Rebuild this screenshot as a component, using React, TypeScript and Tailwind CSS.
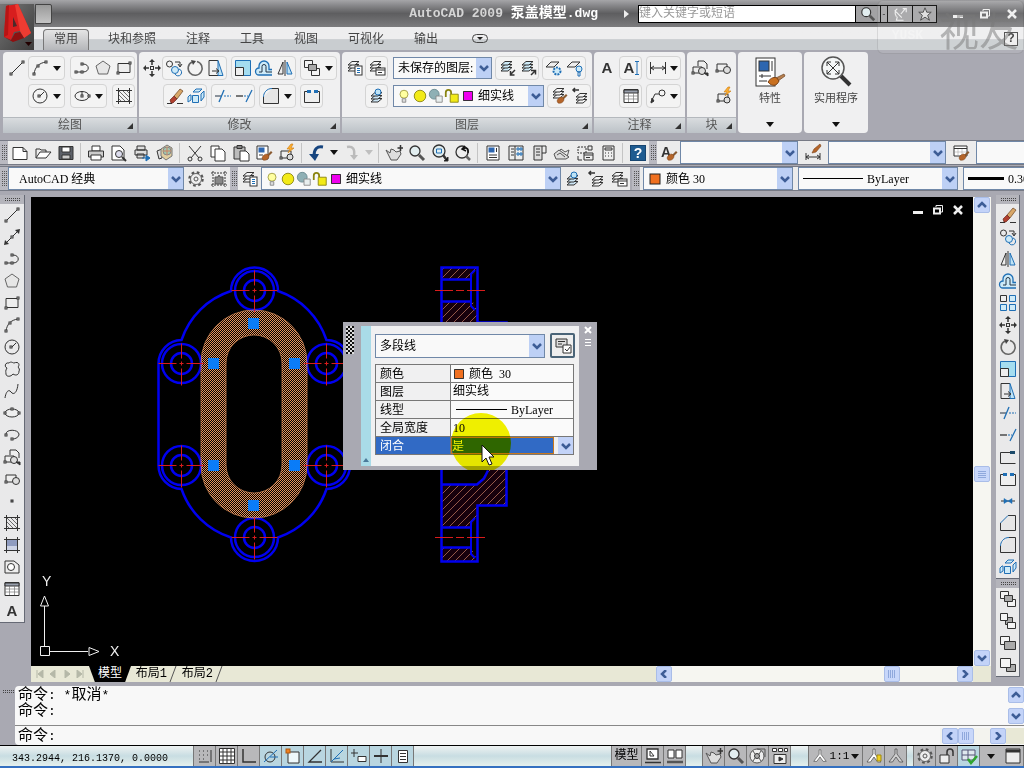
import type { ReactNode } from 'react';
import clsx from 'clsx';

const BLUE = '#1f6fb5';

function Node({ x, y }: { x: number; y: number }) {
  return <rect x={x - 1} y={y - 1} width="2" height="2" fill="#fff" stroke="#333" />;
}

function Stack({ x = 0, y = 0, fill = '#f4f4f4' }: { x?: number; y?: number; fill?: string }) {
  return (
    <g transform={`translate(${x} ${y})`} fill={fill}>
      <path d="M5 7.5h7l-4 3.5H1z" />
      <path d="M5 4.5h7l-4 3.5H1z" />
      <path d="M5 1.5h7l-4 3.5H1z" />
    </g>
  );
}

function Brush() {
  return (
    <g stroke="none">
      <path d="M12 11l4-4 1.500 1.500-4 4z" fill="#8a5a30" />
      <path d="M7 14c1-3 3-4 5-4l2 2c0 3-3 5-6 4z" fill="#b5652a" stroke="#7a4218" strokeWidth=".5" />
    </g>
  );
}

function Runner({ color = '#fff' }: { color?: string }) {
  return (
    <g stroke="#444" strokeWidth=".7" fill={color}>
      <path d="M8 2h2v5l6 8h-3.500L9 10l-3.500 5H2l6-8z" />
    </g>
  );
}

const icons: Record<string, ReactNode> = {
  line: <><path d="M3 15L15 3" /><Node x={3} y={15} /><Node x={15} y={3} /></>,
  xline: <><path d="M2 16L16 2" /><path d="M1 17l1-5 4 4zM17 1l-1 5-4-4z" fill="#333" stroke="none" /><Node x={9} y={9} /></>,
  pline: <><path d="M3 13h7c7 0 7-8 0-8" /><Node x={3} y={13} /><Node x={9} y={13} /><Node x={9} y={5} /></>,
  polygon: <path d="M9 2l7 5-2.500 8h-9L2 7z" fill="#e6e6e6" stroke="#666" />,
  rect: <><path d="M3 4.500h12v9H3z" fill="#eee" /><Node x={3} y={14} /><Node x={15} y={4} /></>,
  arc: <><path d="M3 15C4 8 8 4 15 3" /><Node x={3} y={15} /><Node x={7} y={7} /><Node x={15} y={3} /></>,
  circle: <><circle cx="9" cy="9" r="7" /><path d="M9 9l4-4" /><Node x={8} y={9} /></>,
  cloud: <path d="M4 8C1 7 2 2 6 3c2-2 4 0 5 0 5-2 6 2 4 4 1 1 2 3 1 4 0 4-3 5-6 3-2 3-7 3-7 0 0-2-1-3 1-6z" />,
  spline: <path d="M2 16c1-7 4-9 6-6s6 2 7-8" />,
  ellipse: <><ellipse cx="9" cy="9" rx="7" ry="4" fill="#eee" /><Node x={9} y={5} /><Node x={2} y={9} /><Node x={16} y={9} /></>,
  ellipseCenter: <><ellipse cx="9" cy="9" rx="7" ry="4.500" /><path d="M9 9V4" /><Node x={9} y={9} /><Node x={16} y={9} /></>,
  ellipseArc: <><path d="M3 8c0-5 12-5 13 0 0 3-3 5-7 5" /><Node x={3} y={9} /><Node x={9} y={13} /></>,
  insert: <><path d="M7 7V2h6l3 3v5M2 8h9v6H2z" fill="#eee" /><circle cx="11" cy="12" r="3.500" fill="#ddd" /><path d="M13 14h4v3z" fill="#333" /><Node x={2} y={14} /></>,
  blockMake: <><path d="M3 5h10v7H3z" fill="#eee" /><circle cx="13" cy="11" r="3.500" fill="#ddd" /><Node x={3} y={12} /></>,
  blockEdit: <><path d="M3 7h10v7H3z" fill="#eee" /><circle cx="12" cy="13" r="3" fill="#ddd" /><Node x={3} y={14} /><path d="M13 0l-4 5h3l-2 4 6-5h-3l2-4z" fill="#ffb030" stroke="#c87812" strokeWidth=".6" /></>,
  point: <rect x="8" y="8" width="2" height="2" fill="#888" />,
  hatch: <><path d="M3.500 1v16M14.500 1v16M1 3.500h16M1 14.500h16" /><path d="M4 4l10 10M4 8l6 6M8 4l6 6M4 12l2 2M12 4l2 2" strokeWidth=".7" /></>,
  gradient: <><path d="M4 4h10v6H4z" fill="#8f9cc0" stroke="none" /><path d="M4 10h10v4H4z" fill="#cdd4e6" stroke="none" /><path d="M3.500 1v16M14.500 1v16M1 3.500h16M1 14.500h16" /></>,
  region: <><path d="M2 3h9l5 4v8H2z" fill="#eee" /><circle cx="8" cy="9" r="3.500" fill="#fff" /></>,
  table: <><path d="M2 2.500h14v13H2z" fill="#fff" /><path d="M2 3h14v3H2z" fill="#99a0ad" /><path d="M2 9h14M2 12h14M6.500 6v9M11.500 6v9" strokeWidth=".7" stroke="#777" /></>,
  mtext: <text x="9" y="14" textAnchor="middle" fontFamily="Liberation Sans" fontWeight="bold" fontSize="15" fill="#333" stroke="none">A</text>,
  dtext: <><text x="7" y="14" textAnchor="middle" fontFamily="Liberation Sans" fontWeight="bold" fontSize="15" fill="#333" stroke="none">A</text><path d="M15 2.500v13M13 2.500h4M13 15.500h4" stroke={BLUE} /></>,
  erase: <><path d="M1 16.500h5M11 16.500h6" /><path d="M8 9l6-7 3 2-6 8z" fill="#d8a768" stroke="#6b4220" strokeWidth=".7" /><path d="M4 13l4-4 3 3-4 4H5z" fill="#b04030" stroke="#6b2a20" strokeWidth=".7" /></>,
  copy: <><circle cx="4.500" cy="5" r="3" /><path d="M10 3h5v4M13 5l2 3 2-3" /><circle cx="10" cy="11" r="3.500" fill="#cdeaf8" stroke={BLUE} /><path d="M14 10a3.500 3.500 0 1 1-4 5" stroke={BLUE} /></>,
  mirror: <><path d="M7 3v12H2z" fill="#eee" /><path d="M9 1v16" /><path d="M11 3v12h5z" fill="#bfe3f5" stroke={BLUE} /></>,
  offset: <><path d="M17 10.500h-3V7A5 5 0 0 0 4 7v2a3.500 3.500 0 0 0 0 7h13" fill="#cdeaf8" stroke={BLUE} strokeWidth="1.300" /><path d="M17 13h-6V7.500a2 2 0 0 0-4 0V13H4" stroke="#234" /></>,
  array: <><path d="M1.500 1.500h6v6h-6z" fill="#eee" /><path d="M10.500 1.500h6v6h-6zM1.500 10.500h6v6h-6zM10.500 10.500h6v6h-6z" fill="#cdeaf8" stroke={BLUE} /></>,
  move: <><path d="M9 1v5M9 12v5M1 9h5M12 9h5" strokeWidth="1.500" /><path d="M9 0l3 3H6zM9 18l3-3H6zM0 9l3-3v6zM18 9l-3-3v6z" fill="#333" stroke="none" /><rect x="7.500" y="7.500" width="3" height="3" /></>,
  rotate: <><path d="M6 3a7 7 0 1 0 5-.5" strokeWidth="1.600" stroke="#666" /><path d="M5 1l5 1-3 4z" fill="#444" stroke="none" /></>,
  scale: <><path d="M1.500 1.500h15v15h-15z" fill="#a5ddf0" stroke={BLUE} /><path d="M1.500 8.500h8v8h-8z" fill="#eee" /></>,
  stretch: <><path d="M11 1.500H2v15h9" /><path d="M11 1.500l5 15h-5z" fill="#bfe3f5" stroke={BLUE} /><path d="M5 12h6M9 9.500l3 2.500-3 2.500" /></>,
  trim: <><path d="M1 9h6" stroke="#234" /><path d="M10 9h7" stroke={BLUE} strokeDasharray="2 1" /><path d="M5 15l5-12" stroke={BLUE} strokeWidth="1.300" /></>,
  extend: <><path d="M1 9h7" strokeWidth="1.300" /><path d="M9 9h4" stroke={BLUE} strokeDasharray="2 1" /><path d="M11 15l6-12" stroke={BLUE} strokeWidth="1.300" /></>,
  breakPt: <><path d="M15 4.500H1.500v11h15" /><path d="M11 4.500h5" stroke="#1b4a6a" strokeWidth="3" /></>,
  breakTwo: <><path d="M6 4.500H1.500v11h15v-11H12" fill="#eee" /><path d="M4 4.500h4M11 4.500h4" stroke={BLUE} strokeWidth="3" /></>,
  join: <><path d="M2 9h14" /><path d="M5 6.500L9 9l-4 2.500zM13 6.500L9 9l4 2.500z" fill={BLUE} stroke={BLUE} strokeWidth=".5" /></>,
  chamfer: <><path d="M9 1.500h7.500v15h-15V9" fill="#e6e6e6" /><path d="M1.500 9L9 1.500" stroke={BLUE} /></>,
  fillet: <><path d="M10 1.500h6.500v15h-15V10" fill="#e6e6e6" /><path d="M1.500 10c0-4 3-8.500 8.500-8.500" stroke={BLUE} /></>,
  explode: <g stroke={BLUE} fill="#cdeaf8"><path d="M5.500 8.500h6v7h-6zM3 8l-2 2v5l3-2V8zM14 7l3-3v6l-3 4zM6 5l3-3h6l-3 3z" /></g>,
  orderFront: <><path d="M1.500 1.500h8v7h-8zM8.500 9.500h8v7h-8z" fill="#f4f4f4" /><path d="M5.500 5.500h8v6h-8z" fill="#aaa" /></>,
  orderBack: <><path d="M6.500 5.500h7v7h-7z" fill="#aaa" /><path d="M1.500 1.500h7v7h-7zM8.500 10.500h8v6h-8z" fill="#f4f4f4" /></>,
  orderAbove: <><path d="M1.500 2.500h9v8h-9z" fill="#f4f4f4" /><path d="M5.500 7.500h11v8h-11z" fill="#aaa" /></>,
  orderUnder: <><path d="M7.500 8.500h9v7h-9z" fill="#aaa" /><path d="M1.500 2.500h10v9h-10z" fill="#f4f4f4" /></>,
  layerProps: <><Stack x={1} y={1} /><rect x="9" y="7" width="7" height="9" fill="#fff" /><path d="M11 9.500h3M11 11.500h3M11 13.500h3" stroke={BLUE} /></>,
  layerState: <><Stack x={1} y={1} /><rect x="8" y="9" width="9" height="7" fill="#fff" /><path d="M8 11h9M10 13.500h4" /></>,
  layerCurrent: <><Stack x={2} y={4} fill="#cde6f5" /><circle cx="10" cy="5" r="3" fill="#bfe3f5" stroke={BLUE} /></>,
  layerIso: <><Stack x={2} y={1} fill="#cdeaf8" /><path d="M17 11l-4 4M12.500 12v4h4" strokeWidth="1.500" /></>,
  layerUniso: <><Stack x={2} y={1} fill="#cdeaf8" /><path d="M12 16l4-4M12 11.500h4.500v4" strokeWidth="1.500" /></>,
  layerFreeze: <><path d="M6 3h8l-5 5H1z" fill="#eee" /><circle cx="12" cy="12" r="3.500" fill="#cdeaf8" stroke={BLUE} strokeDasharray="2 1" strokeWidth="2" /></>,
  layerOff: <><path d="M6 3h8l-5 5H1z" fill="#eee" /><circle cx="13" cy="10" r="3" fill="#cdeaf8" stroke={BLUE} /><path d="M12 13h2v4h-2z" stroke={BLUE} /></>,
  layerMatch: <><Stack x={2} y={0} /><Brush /></>,
  layerPrev: <><Stack x={4} y={5} /><path d="M8 3H2M4 1L2 3l2 2" strokeWidth="1.500" /></>,
  dim: <path d="M1.500 3v12M16.500 3v12M2 9h14M5 7L2 9l3 2M13 7l3 2-3 2" />,
  leader: <><path d="M2 15l4-8h4" /><path d="M2 16l1-5 2 3z" fill="#333" /><circle cx="13" cy="6" r="3" /></>,
  bulb: <><circle cx="9" cy="7" r="4.500" fill="#ffffa0" stroke="#a09c40" /><path d="M7 12h4v4H7z" fill="#ddd" stroke="#888" /></>,
  sun: <circle cx="9" cy="9" r="6.500" fill="#f2ea18" stroke="#8a8410" />,
  viewport: <><circle cx="7" cy="7" r="5.500" fill="#8fb0b5" stroke="#6a8a90" /><path d="M9 9h7v7H9z" fill="#e8eeee" stroke="#888" /></>,
  unlock: <><path d="M2 10V5c0-4 6-4 6 0v2" stroke="#8a8410" strokeWidth="2" /><path d="M7 7h9v9H7z" fill="#f2ea18" stroke="#8a8410" /></>,
  magenta: <rect x="4" y="4" width="10" height="10" fill="#ee00ee" stroke="#222" />,
  orange: <rect x="4" y="4" width="10" height="10" fill="#f07020" stroke="#222" />,
  fileNew: <path d="M2 3.500h10l4 4v8H2zM12 3.500v4h4" fill="#fff" />,
  open: <><path d="M2 14V5h4l1 1h5v3" fill="#eee" /><path d="M2 14l4-6h11l-5 6z" fill="#fff" /></>,
  save: <><path d="M2 2.500h14v13H2z" fill="#5c6068" /><path d="M5 3h8v5H5z" fill="#fff" /><path d="M5 11h8v4H5z" fill="#ccc" /></>,
  print: <><path d="M5 2h8v5H5z" fill="#fff" /><path d="M1.500 7h15v6h-15z" fill="#ccc" /><path d="M4 11h10v5H4z" fill="#fff" /></>,
  preview: <><path d="M2 2h8l4 4v10H2z" fill="#fff" /><circle cx="9" cy="10" r="3.500" fill="#dde" /><path d="M12 13l4 4" strokeWidth="2" /></>,
  publish: <><path d="M4 2h8v4H4zM2 6h12v5H2zM4 10h7v4H4z" fill="#ddd" /><path d="M9 14h5M13 11l4 3-4 3z" stroke={BLUE} fill={BLUE} /></>,
  dwf: <><path d="M1 7l5-2v9l-3 1z" fill="#ddd" /><path d="M5 5l6-4 5 3v8l-6 4-5-4z" fill="#e0cda0" stroke="#777" /><circle cx="11" cy="7" r="4" fill="#9fc6b0" stroke="#888" /><path d="M11 3v8M7 7h8" stroke="#d08060" /></>,
  cut: <><path d="M3 2l10 12M15 2L5 14" /><circle cx="4" cy="15" r="2" /><circle cx="14" cy="15" r="2" /></>,
  copyClip: <><path d="M2 2h8v11H2z" fill="#fff" /><path d="M6 5h7l3 3v9H6z" fill="#fff" /></>,
  paste: <><path d="M2 3h11v12H2z" fill="#bbb" /><path d="M5 1.500h5v3H5z" fill="#888" /><path d="M8 7h6l3 3v7H8z" fill="#fff" /></>,
  match: <><path d="M2 2h11v13H2z" fill="#fff" /><path d="M3.500 3.500h6v5h-6z" fill="#2d66b0" stroke="none" /><path d="M4 11h4" /><Brush /></>,
  undo: <><path d="M15 3C9 2 6 5 6 12" stroke="#17457f" strokeWidth="3" /><path d="M1 10h10l-4 7z" fill="#17457f" stroke="none" /></>,
  redo: <><path d="M4 3c6-1 8 2 7 9" stroke="#bbb" strokeWidth="2.500" /><path d="M7 11h8l-4 5z" fill="#bbb" stroke="none" /></>,
  pan: <><path d="M1 6l4 3 1-4 3 1 2 2 4-1 1 3-4 6H6z" fill="#ddd" stroke="#555" /><path d="M12.500 4H18M15.500 1v6" strokeWidth="1.500" /></>,
  zoom: <><circle cx="7" cy="7" r="5" fill="#e2eef0" strokeWidth="1.300" /><path d="M11 11l5 5" strokeWidth="3" stroke="#555" /></>,
  zoomWin: <><circle cx="8" cy="7" r="6" fill="#e2eef0" strokeWidth="1.300" /><path d="M5.500 5h5v4h-5z" stroke={BLUE} /><path d="M12 11l3 4" strokeWidth="2.500" /><path d="M17 13v4h-4z" fill="#111" /></>,
  zoomPrev: <><circle cx="8" cy="8" r="6" fill="#eee" strokeWidth="1.300" /><path d="M12 12l4 4" strokeWidth="2.500" stroke="#666" /><path d="M14 9c1-5-2-6-5-4M11 2L8 5l4 2" strokeWidth="1.500" stroke="#111" /></>,
  props: <><path d="M3 2h12v14H3z" fill="#fff" /><path d="M4.500 3.500h6v5h-6z" fill="#2d66b0" stroke="none" /><path d="M5 11h8M5 13.500h8M12.500 4v4" /></>,
  designCenter: <><path d="M2 2h14v14H2zM8 2v14M4 5h3M4 8h3M4 11h3" fill="#eee" /><path d="M10 4h2v2h-2zM13 4h2v2h-2zM10 9h2v2h-2zM13 9h2v2h-2z" stroke={BLUE} /></>,
  palettes: <><path d="M4 2h8v14H4z" fill="#ddd" /><path d="M12 2h4v7h-4M6 5h4M6 8h4M6 11h4" /></>,
  sheets: <><path d="M2 13l6-8 4 3 4-2-2 7z" fill="#eee" stroke="#555" /><path d="M1 10l5-4 10 7-3 2H3z" fill="#ddd" stroke="#555" /><path d="M4 11l3-2 5 4" stroke="#555" /></>,
  markup: <><path d="M2 3h8v6H2z" strokeDasharray="2 1" /><path d="M12 2h4v4h-4z" /><path d="M8 9h9v7H8z" fill="#eee" /><path d="M8 11h9M10 13.500h4M2 12v4h4" /></>,
  calc: <><path d="M4 2h11v14H4z" fill="#eee" /><path d="M6 4h7v2H6zM6 9h1M9 9h1M12 9h1M6 12h1M9 12h1M12 12h1" /></>,
  help: <><rect x="1.500" y="1.500" width="15" height="15" fill="#1f5c91" stroke="#174570" /><text x="9" y="14" textAnchor="middle" fontFamily="Liberation Sans" fontWeight="bold" fontSize="14" fill="#fff" stroke="none">?</text></>,
  textStyle: <><text x="6" y="13" textAnchor="middle" fontFamily="Liberation Sans" fontWeight="bold" fontSize="14" fill="#333" stroke="none">A</text><Brush /></>,
  dimStyle: <><path d="M2 9v7M16 9v7M2 13h14M5 11l-3 2 3 2M13 11l3 2-3 2" /><path d="M8 9l2-4 6-5 1 2-5 6z" fill="#b5652a" stroke="#7a4218" strokeWidth=".6" /></>,
  tableStyle: <><path d="M2 2h13v10H2z" fill="#fff" /><path d="M2 4.500h13" /><path d="M6 5v7M10 5v7M2 8h13" strokeWidth=".5" stroke="#999" /><Brush /></>,
  gear: <><circle cx="9" cy="9" r="6.500" strokeWidth="2.500" stroke="#555" strokeDasharray="2.600 2.500" /><circle cx="9" cy="9" r="5.500" fill="#eee" stroke="#666" /><circle cx="9" cy="9" r="2" stroke="#555" /></>,
  workspace: <><path d="M3 1v16M15 1v16M1 3h16M1 15h16" strokeDasharray="2 1" /><path d="M5 7h3l1-2 1 2h3v7H5z" fill="#888" stroke="#555" /></>,
  snap: <path d="M3 4h1M7 4h1M11 4h1M3 8h1M7 8h1M11 8h1M3 12h1M7 12h1M3 15h10M15 3v12" />,
  grid: <path d="M1.500 1.500h15v15h-15zM1.500 5h15M1.500 9h15M1.500 13h15M5 2v14M9 2v14M13 2v14" fill="#fff" />,
  ortho: <path d="M3 2v13h13" strokeWidth="1.500" />,
  polar: <><circle cx="8" cy="10" r="5" /><path d="M2 15L15 3M8 10h8" stroke={BLUE} /></>,
  osnap: <><path d="M4 5h11v11H4z" fill="#eef8fb" /><rect x="2" y="2" width="4" height="4" fill="#f08020" stroke="#b05a10" /></>,
  otrack: <path d="M15 3L3 15h13" strokeWidth="1.300" />,
  ducs: <><path d="M3 2v13h13" /><path d="M3 15L15 3M6 12l6-1" stroke={BLUE} /></>,
  dyn: <><path d="M4 2v8M1 6h7" /><path d="M8 9.500h8v5H8z" fill="#fff" /></>,
  lwt: <><path d="M2 9h14" strokeWidth="2" /><path d="M9 2v14" /></>,
  quickProps: <><path d="M4.500 3.500h9v12h-9z" fill="#fff" /><path d="M6 6.500h6M6 9.500h6M6 12.500h6" /></>,
  modelSheet: <><path d="M3 2h11v10H3zM1 15.500h16" fill="#fff" strokeWidth="1.300" /><path d="M6 4v5h4z" /></>,
  quickView: <><path d="M2 3h6v8H2zM10 3h6v8h-6z" fill="#fff" /><path d="M1 15h16" strokeWidth="2.500" stroke="#555" /></>,
  wheel: <><circle cx="8" cy="9" r="7" fill="#eee" stroke="#555" /><circle cx="8" cy="9" r="2.500" fill="#aaa" /><path d="M8 2h8v8M4 4l2 3M12 4l-2 3M4 14l2-3M12 14l-2-3" stroke="#555" /></>,
  motion: <><path d="M1.500 1.500h4v3h-4zM7.500 1.500h4v3h-4zM13.500 1.500h3v3h-3z" fill="#fff" /><path d="M3 7.500h12v9H3z" fill="#eee" /><path d="M8 10l4 2-4 2z" fill="#333" /></>,
  scaleMan: <Runner />,
  scaleVis: <><Runner /><path d="M12 8h4v6h-4z" fill="#f0d020" stroke="#a08a10" /></>,
  scaleAuto: <Runner color="#d0d0d0" />,
  padlock: <><path d="M2 8h9v8H2z" fill="#eee" /><path d="M9 8V5c0-4 6-4 6 0v4" strokeWidth="1.500" /></>,
  status: <><path d="M2 3h13v10H2zM8 3v10M2 8h13" fill="#dfe8ee" stroke="#557" /><path d="M8 12l3 4 6-7" stroke="#2fa52f" strokeWidth="2.500" /></>,
  clean: <><path d="M2 2h14v14H2z" fill="#eee" /><path d="M2 4h14" strokeWidth="3" /></>,
  star: <path d="M9 2l2 5h5l-4 3.500 2 5.500-5-3.500L4 16l2-5.500L2 7h5z" fill="#ddd" />,
  satellite: <path d="M3 5l8 8M5 12c-3-4-1-8 1-9M6 12l-1 4h8M10 9l5-6M12 3h4v4" stroke="#eee" strokeWidth="1.300" />,
  optionPick: <><path d="M2 2h11v8H2zM4 4.500h7M4 7h4" fill="#ddd" /><path d="M9 8h8v8H9z" fill="#fff" /><path d="M11 12l2 2 3-4" /></>,
};

function Icon({ name, size = 'size-[18px]' }: { name: string; size?: string }) {
  return (
    <svg viewBox="0 0 18 18" className={clsx(size, 'shrink-0 overflow-visible')} fill="none" stroke="#333" strokeWidth="1" aria-hidden="true">
      {icons[name]}
    </svg>
  );
}

function Caret() {
  return (
    <svg viewBox="0 0 8 5" className="h-[5px] w-2 shrink-0" aria-hidden="true">
      <path d="M0 0h8L4 5z" fill="#111" />
    </svg>
  );
}

function Tool({ name, className = 'h-[22px] w-[21px]' }: { name: string; className?: string }) {
  return (
    <button type="button" aria-label={name} className={clsx('flex shrink-0 items-center justify-center', className)}>
      <Icon name={name} />
    </button>
  );
}

function DropArrow({ className = 'h-[22px] w-[14px]' }: { className?: string }) {
  return (
    <button type="button" aria-label="more" className={clsx('flex shrink-0 items-center justify-center', className)}>
      <Caret />
    </button>
  );
}

function Group({ children }: { children: ReactNode }) {
  return <div className="flex h-6 shrink-0 items-center rounded-sm border border-[#d4d4d4] bg-[#f3f3f3]">{children}</div>;
}

const chevrons = {
  down: 'M1 2l4 4 4-4',
  up: 'M1 6l4-4 4 4',
  left: 'M7 0L3 4l4 4',
  right: 'M3 0l4 4-4 4',
};

function Chevron({ dir }: { dir: keyof typeof chevrons }) {
  return (
    <svg viewBox="0 0 10 8" className="h-2 w-[10px]" fill="none" stroke="#3d5d96" strokeWidth="2.500" aria-hidden="true">
      <path d={chevrons[dir]} />
    </svg>
  );
}

function Combo({ label, value, lead, className }: { label: string; value: string; lead?: ReactNode; className: string }) {
  return (
    <div className={clsx('flex shrink-0 items-center border border-[#7088a8] bg-[#f9f9f9] pl-0.5', className)}>
      {lead}
      <select
        aria-label={label}
        className="h-full min-w-0 flex-1 appearance-none bg-transparent pl-0.5 font-['Liberation_Serif','Noto_Sans_CJK_SC',serif] text-xs text-black outline-none"
      >
        <option>{value}</option>
      </select>
      <span className="pointer-events-none flex h-full w-[15px] shrink-0 items-center justify-center bg-[#bdd0f5]">
        <Chevron dir="down" />
      </span>
    </div>
  );
}

function LayerIcons() {
  return (
    <div className="flex shrink-0">
      {['bulb', 'sun', 'viewport', 'unlock', 'magenta'].map((n) => (
        <span key={n} className="flex w-4 justify-center">
          <Icon name={n} size="size-4" />
        </span>
      ))}
    </div>
  );
}

function Panel({ title, className, children }: { title: string; className: string; children: ReactNode }) {
  return (
    <section className={clsx('flex shrink-0 flex-col rounded-sm bg-[#f0f0f1]', className)}>
      <div className="flex flex-1 flex-col gap-1 pt-1">{children}</div>
      <div className="relative flex h-4 items-center justify-center border-t border-[#b4b8bd] bg-linear-to-b from-[#d9dcdf] to-[#bcc2c7] text-xs text-[#555]">
        {title}
        <svg viewBox="0 0 6 6" className="absolute right-1 size-1.5" aria-hidden="true">
          <path d="M6 0v6H0z" fill="#333" />
        </svg>
      </div>
    </section>
  );
}

function TallPanel({ title, children }: { title: string; children: ReactNode }) {
  return (
    <button type="button" className="flex w-16 shrink-0 flex-col items-center justify-between rounded-sm bg-[#f0f0f1] pb-1.5 pt-1 text-[11px] text-[#444]">
      <svg viewBox="0 0 32 32" className="size-8" fill="none" stroke="#333" aria-hidden="true">
        {children}
      </svg>
      <span className="-mt-3">{title}</span>
      <Caret />
    </button>
  );
}

function Grip() {
  return (
    <div className="flex w-2 shrink-0 items-center justify-center bg-[#b9b9c1]">
      <div className="h-4 w-1.5 bg-[conic-gradient(#555_25%,transparent_0)] bg-[size:2px_2px]" />
    </div>
  );
}

function HGrip() {
  return (
    <div className="flex h-[9px] items-center justify-center bg-[#b4b4bb]">
      <div className="h-1 w-4 bg-[conic-gradient(#444_25%,transparent_0)] bg-[size:2px_2px]" />
    </div>
  );
}

function Rule() {
  return <span className="mx-[3px] h-5 w-px shrink-0 bg-[#c4c4c4]" />;
}

function ScrollButton({ dir }: { dir: keyof typeof chevrons }) {
  return (
    <button type="button" aria-label={`scroll ${dir}`} className="flex size-4 shrink-0 items-center justify-center rounded-xs border border-[#a9bde8] bg-[#c3d3f8]">
      <Chevron dir={dir} />
    </button>
  );
}

function Thumb({ vertical = false }: { vertical?: boolean }) {
  return (
    <span className="flex size-4 shrink-0 items-center justify-center rounded-xs border border-[#a9bde8] bg-[#c8d7fa]">
      <span
        className={clsx(
          'size-2',
          vertical
            ? 'bg-[repeating-linear-gradient(0deg,#8fa8dc_0_1px,transparent_1px_2px)]'
            : 'bg-[repeating-linear-gradient(90deg,#8fa8dc_0_1px,transparent_1px_2px)]',
        )}
      />
    </span>
  );
}

function TitleBar() {
  return (
    <header className="flex h-[27px] items-center justify-end bg-linear-to-b from-[#a5a5a8] via-[#5e5e60] to-[#7c7c7e] pl-[35px]">
      <div className="mr-auto h-5 w-[17px] rounded-r-xs border border-[#444] bg-linear-to-b from-[#999] to-[#c5c5c5]" />
      <h1 className="whitespace-pre text-sm font-bold text-white">
        <span className="text-[13px] text-[#d5d5d5]">AutoCAD 2009 </span>
        泵盖模型<span className="text-[13px]">.dwg</span>
      </h1>
      <button type="button" aria-label="expand search" className="ml-6 mr-2 flex w-2 justify-center">
        <svg viewBox="0 0 5 8" className="h-2 w-[5px]"><path d="M0 0l5 4-5 4z" fill="#eee" /></svg>
      </button>
      <input
        aria-label="search"
        placeholder="键入关键字或短语"
        className="h-[18px] w-[218px] border border-black bg-white text-xs text-black outline-none placeholder:text-[#999]"
      />
      <div className="flex h-[18px] border border-l-0 border-black bg-[#a2a2a4]">
        <button type="button" aria-label="find" className="flex w-6 items-center justify-center"><Icon name="zoom" size="size-4" /></button>
        <button type="button" aria-label="find options" className="w-2 border-x border-black text-[8px]">-</button>
        <button type="button" aria-label="communication" className="flex w-6 items-center justify-center"><Icon name="satellite" size="size-4" /></button>
        <button type="button" aria-label="favorites" className="flex w-6 items-center justify-center border-l border-black"><Icon name="star" size="size-4" /></button>
      </div>
      <WindowButtons className="ml-4 gap-[17px] pr-[7px]" />
    </header>
  );
}

function WindowButtons({ className }: { className: string }) {
  return (
    <div className={clsx('flex', className)}>
      <button type="button" aria-label="minimize">
        <svg viewBox="0 0 10 10" className="size-[10px]"><path d="M0 6h10v3H0z" fill="#eee" /></svg>
      </button>
      <button type="button" aria-label="restore">
        <svg viewBox="0 0 10 10" className="size-[10px]" fill="none" stroke="#eee"><path d="M3 2V.5h6.500V7H8" /><path d="M1 3.500h6v5H1z" strokeWidth="2" /></svg>
      </button>
      <button type="button" aria-label="close">
        <svg viewBox="0 0 10 10" className="size-[10px]" stroke="#eee" strokeWidth="2.500"><path d="M1 1l8 8M9 1L1 9" /></svg>
      </button>
    </div>
  );
}

const ribbonTabs = ['常用', '块和参照', '注释', '工具', '视图', '可视化', '输出'];

function RibbonTabs() {
  return (
    <nav className="flex h-[23px] items-end gap-2 bg-linear-to-b from-[#eeeeef] from-50% to-[#c9cdd0] to-55% pl-[43px] pr-1.5">
      {ribbonTabs.map((tab, i) => (
        <button
          key={tab}
          type="button"
          className={clsx(
            'h-[21px] rounded-t-sm border border-b-0 px-[10px] text-xs text-[#444]',
            i === 0 ? 'border-[#777] bg-linear-to-b from-[#e5e5e5] to-[#b5b7ba]' : 'border-transparent',
          )}
        >
          {tab}
        </button>
      ))}
      <button type="button" aria-label="ribbon display" className="mb-[7px] ml-[15px] flex h-[9px] w-4 items-center justify-center rounded-full border border-[#444]">
        <svg viewBox="0 0 6 3" className="h-[3px] w-1.5"><path d="M0 0h6L3 3z" fill="#222" /></svg>
      </button>
      <button type="button" aria-label="help" className="mb-1 ml-auto flex size-[14px] items-center justify-center border border-[#444] bg-[#eee] text-xs font-bold text-[#333]">
        ?
      </button>
    </nav>
  );
}

function Ribbon() {
  return (
    <div className="flex h-[85px] gap-0.5 overflow-hidden px-[3px] pb-0.5 pt-0.5">
      <Panel title="绘图" className="w-[134px]">
        <div className="flex gap-[5px] pl-[3px]">
          <div className="-mr-1 flex items-center"><Tool name="line" /></div>
          <Group><Tool name="arc" /><DropArrow /></Group>
          <Group><Tool name="pline" /><Tool name="polygon" /><Tool name="rect" /></Group>
        </div>
        <div className="flex gap-[5px] pl-[25px]">
          <Group><Tool name="circle" /><DropArrow /></Group>
          <Group><Tool name="ellipseCenter" /><DropArrow /></Group>
          <Group><Tool name="hatch" /></Group>
        </div>
      </Panel>
      <Panel title="修改" className="w-[201px]">
        <div className="flex gap-1 pl-0.5">
          <div className="-mr-1 flex items-center"><Tool name="move" /></div>
          <Group><Tool name="copy" /><Tool name="rotate" /><Tool name="stretch" /></Group>
          <Group><Tool name="scale" /><Tool name="offset" /><Tool name="mirror" /></Group>
          <Group><Tool name="orderFront" /><DropArrow /></Group>
        </div>
        <div className="flex gap-1 pl-6">
          <Group><Tool name="erase" /><Tool name="explode" /></Group>
          <Group><Tool name="trim" /><Tool name="extend" /></Group>
          <Group><Tool name="fillet" /><DropArrow /></Group>
          <Group><Tool name="breakTwo" /></Group>
        </div>
      </Panel>
      <Panel title="图层" className="w-[250px]">
        <div className="flex items-center gap-[3px] pl-0.5">
          <div className="flex items-center"><Tool name="layerProps" /><Group><Tool name="layerState" /></Group></div>
          <Combo label="layer state" value="未保存的图层:" className="ml-0.5 h-[22px] w-[99px]" />
          <Group><Tool name="layerIso" /><Tool name="layerUniso" /></Group>
          <Group><Tool name="layerFreeze" /><Tool name="layerOff" /></Group>
        </div>
        <div className="flex items-center gap-[3px] pl-[23px]">
          <Group><Tool name="layerCurrent" /></Group>
          <Combo label="layer" value="细实线" className="ml-0.5 h-[22px] w-[151px]" lead={<LayerIcons />} />
          <Group><Tool name="layerMatch" /><Tool name="layerPrev" /></Group>
        </div>
      </Panel>
      <Panel title="注释" className="w-[91px]">
        <div className="flex gap-1 pl-0.5">
          <div className="-mr-0.5 flex items-center"><Tool name="mtext" /></div>
          <Group><Tool name="dtext" /></Group>
          <Group><Tool name="dim" /><DropArrow className="h-[22px] w-3" /></Group>
        </div>
        <div className="flex gap-1 pl-[25px]">
          <Group><Tool name="table" /></Group>
          <Group><Tool name="leader" /><DropArrow className="h-[22px] w-3" /></Group>
        </div>
      </Panel>
      <Panel title="块" className="w-[49px]">
        <div className="flex h-6 items-center gap-0.5 pl-0.5"><Tool name="insert" /><Tool name="blockMake" /></div>
        <div className="flex h-6 items-center justify-end pr-0.5"><Tool name="blockEdit" /></div>
      </Panel>
      <TallPanel title="特性">
        <rect x="2" y="2" width="19" height="28" fill="#fff" />
        <rect x="5" y="5" width="10" height="10" fill="#2d66b0" />
        <path d="M18 5v10M5 20h12M5 25h8M8 18v4" />
        <path d="M22 22l8-4 1 2-7 5z" fill="#b88050" stroke="#6b4220" strokeWidth=".7" />
        <path d="M14 26c3-5 7-5 9-4l2 3c-2 5-7 6-11 1z" fill="#c87020" stroke="#7a4218" />
      </TallPanel>
      <TallPanel title="实用程序">
        <path d="M21 20l9 9" strokeWidth="4" />
        <circle cx="13" cy="12" r="11" fill="#f4f6f6" stroke="#555" strokeWidth="1.500" />
        <path d="M7 6l12 12M19 6L7 18M7 10V6h4M15 6h4v4M19 14v4h-4M11 18H7v-4" />
      </TallPanel>
    </div>
  );
}

const standardTools = [
  ['fileNew', 'open', 'save'],
  ['print', 'preview', 'publish', 'dwf'],
  ['cut', 'copyClip', 'paste', 'match', 'blockEdit'],
];
const viewTools = [
  ['pan', 'zoom', 'zoomWin', 'zoomPrev'],
  ['props', 'designCenter', 'palettes', 'sheets', 'markup', 'calc'],
  ['help'],
];

function StandardBar() {
  const cell = 'h-6 w-[23px]';
  return (
    <div className="flex h-[25px] overflow-hidden border-y border-[#777a85]">
      <Grip />
      <div className="flex shrink-0 items-center bg-[#ececec]">
        {standardTools.map((set) => (
          <div key={set[0]} className="flex items-center">
            {set.map((n) => <Tool key={n} name={n} className={cell} />)}
            <Rule />
          </div>
        ))}
        <Tool name="undo" className={cell} />
        <DropArrow className="h-6 w-3" />
        <Tool name="redo" className={cell} />
        <span className="flex opacity-20"><DropArrow className="h-6 w-3" /></span>
        {viewTools.map((set) => (
          <div key={set[0]} className="flex items-center">
            <Rule />
            {set.map((n) => <Tool key={n} name={n} className={cell} />)}
          </div>
        ))}
      </div>
      <Grip />
      <div className="flex flex-1 items-center bg-[#ececec]">
        <Tool name="textStyle" className={cell} />
        <Combo label="text style" value="" className="h-full w-[118px]" />
        <span className="flex w-[30px] justify-center"><Tool name="dimStyle" className={cell} /></span>
        <Combo label="dimension style" value="" className="h-full w-[118px]" />
        <span className="flex w-[30px] justify-center"><Tool name="tableStyle" className={cell} /></span>
        <Combo label="table style" value="" className="h-full w-[118px]" />
      </div>
    </div>
  );
}

function PropertiesBar() {
  const cell = 'h-6 w-[23px]';
  return (
    <div className="mt-px flex h-[25px] overflow-hidden border-y border-[#777a85]">
      <Grip />
      <div className="flex shrink-0 items-center bg-[#ececec]">
        <Combo label="workspace" value="AutoCAD 经典" lead={<span className="w-1.5" />} className="h-full w-[176px]" />
        <Tool name="gear" className={cell} />
        <Tool name="workspace" className={cell} />
      </div>
      <Grip />
      <div className="flex shrink-0 items-center bg-[#ececec]">
        <Tool name="layerProps" className={cell} />
        <Combo label="layer" value="细实线" className="h-full w-[300px]" lead={<LayerIcons />} />
        <Tool name="layerCurrent" className={cell} />
        <Tool name="layerPrev" className={cell} />
        <Tool name="layerState" className={cell} />
      </div>
      <div className="w-0.5 shrink-0" />
      <Grip />
      <div className="flex flex-1 gap-[5px] bg-[#ececec] pl-[3px]">
        <Combo label="color" value="颜色 30" className="h-full w-[150px]" lead={<Icon name="orange" />} />
        <Combo label="linetype" value="ByLayer" className="h-full w-[160px]" lead={<span className="mx-0.5 h-px w-[60px] bg-black" />} />
        <Combo label="lineweight" value="0.30 毫米" className="h-full w-[160px]" lead={<span className="mx-0.5 h-[3px] w-9 bg-black" />} />
      </div>
    </div>
  );
}

const drawTools = ['line', 'xline', 'pline', 'polygon', 'rect', 'arc', 'circle', 'cloud', 'spline', 'ellipse', 'ellipseArc', 'insert', 'blockMake', 'point', 'hatch', 'gradient', 'region', 'table', 'mtext'];
const modifyTools = ['erase', 'copy', 'mirror', 'offset', 'array', 'move', 'rotate', 'scale', 'stretch', 'trim', 'extend', 'breakPt', 'breakTwo', 'join', 'chamfer', 'fillet', 'explode'];
const orderTools = ['orderFront', 'orderBack', 'orderAbove', 'orderUnder'];

function SideBar({ tools }: { tools: string[] }) {
  return (
    <div className="border-r border-b border-[#666a75] bg-[#e9e9ea]">
      <HGrip />
      {tools.map((n) => <Tool key={n} name={n} className="h-[22px] w-6" />)}
    </div>
  );
}

const bolts = [
  [254.5, 290.5],
  [181.5, 363.5],
  [326.5, 363.5],
  [181.5, 465.5],
  [326.5, 465.5],
  [254.5, 537.5],
];
const grips = [[253, 323], [213, 363], [294, 363], [213, 465], [294, 465], [253, 505]];

function Drawing() {
  return (
    <svg className="absolute inset-0 h-full w-full" fill="none" aria-label="泵盖模型">
      <defs>
        <pattern id="dither" width="2" height="2" patternUnits="userSpaceOnUse">
          <path d="M0 0h1v1H0zM1 1h1v1H1z" fill="#e8945c" shapeRendering="crispEdges" />
        </pattern>
        <pattern id="section" width="8" height="8" patternUnits="userSpaceOnUse">
          <rect width="8" height="8" fill="#16000c" />
          <path d="M-1 9L9-1M-1 1l2-2M7 9l2-2" stroke="#94584a" />
        </pattern>
      </defs>
      <g transform="translate(-31 -197)">
        <g stroke="#0000f0" strokeWidth="2.500">
          <path d="M231 291A23.500 23.500 0 0 1 278 291A77 77 0 0 1 326.500 340A23.500 23.500 0 0 1 350 363.500V465.500A23.500 23.500 0 0 1 326.500 489A77 77 0 0 1 278 537.500A23.500 23.500 0 0 1 231 537.500A77 77 0 0 1 181.500 489A23.500 23.500 0 0 1 158.500 465.500V363.500A23.500 23.500 0 0 1 181.500 340A77 77 0 0 1 231 291Z" />
          {bolts.map(([x, y]) => (
            <g key={`${x}-${y}`}>
              <circle cx={x} cy={y} r="19.500" />
              <circle cx={x} cy={y} r="10.500" />
            </g>
          ))}
        </g>
        <path
          d="M201 363a53 53 0 0 1 106 0v102a53 53 0 0 1-106 0zM226 363a28 28 0 0 1 56 0v102a28 28 0 0 1-56 0z"
          fill="url(#dither)"
          fillRule="evenodd"
          stroke="#d08858"
          strokeWidth=".7"
        />
        <g stroke="#d81c1c">
          {bolts.map(([x, y]) => (
            <path key={`${x}-${y}`} d={`M${x - 23} ${y}h18m3 0h4m3 0h18M${x} ${y - 20}v15m0 3v4m0 3v17`} />
          ))}
        </g>
        {grips.map(([x, y]) => <rect key={`${x}-${y}`} x={x - 5} y={y - 5} width="11" height="11" fill="#0a7cf8" />)}

        <g fill="url(#section)">
          <path d="M441 267h37l-7 13h-30zM441 302h32l5 10v10h-37zM441 485h36l12-15h17v35h-28v11l-7 11h-30zM441 548h30l7 13h-37z" />
        </g>
        <g stroke="#0000f0" strokeWidth="2.500">
          <path d="M441.500 267.500H477.500V322.500H506.500V505.500H477.500V561.500H441.500ZM441.500 279.500H471M441.500 301.500H471M441.500 484.500H477l7-6 4-8M441.500 527.500H471M441.500 547.500H471" />
          <path d="M475 270l-4 4v32l4 4M475 518l-4 4v32l4 4" strokeWidth="2" />
        </g>
        <path d="M435 290.500h18m3 0h8m3 0h18M435 537.500h18m3 0h8m3 0h18" stroke="#d81c1c" />
      </g>
    </svg>
  );
}

function UcsIcon() {
  return (
    <svg viewBox="0 0 90 90" className="absolute bottom-0 left-1 size-[90px] overflow-visible" fill="none" stroke="#f0f0f0" aria-hidden="true">
      <path d="M5.500 70.500h9v9h-9zM9.500 70V30M15 75.500h38M9.500 20l-4 10h8zM64 75.500l-10-4v8z" />
      <g fill="#f0f0f0" stroke="none" fontFamily="Liberation Sans" fontSize="14">
        <text x="7" y="10">Y</text>
        <text x="75" y="80">X</text>
      </g>
    </svg>
  );
}

function QuickProperties() {
  const head = 'w-[75px] border border-[#777] pl-1 text-left font-normal';
  const cell = 'border border-[#777] bg-[#fafafa] p-0';
  return (
    <section className="absolute left-[312px] top-[125px] flex w-[254px] overflow-hidden bg-[#a9a9b2] py-1 font-['Liberation_Serif','Noto_Sans_CJK_SC',serif] text-xs text-black">
      <div className="w-[18px] pl-[3px]">
        <div className="h-7 w-2 bg-[conic-gradient(#111_25%,#ddd_0_50%,#111_0_75%,#ddd_0)] bg-[size:4px_4px]" />
      </div>
      <div className="flex w-2.5 items-end justify-center bg-[#a9dbe8]">
        <svg viewBox="0 0 6 4" className="mb-1 h-1 w-1.5"><path d="M0 4h6L3 0z" fill="#4a7a9a" /></svg>
      </div>
      <div className="flex h-[140px] w-[208px] flex-col gap-1.5 bg-[#f0f0f1] px-1 pt-[7px]">
        <div className="flex items-center gap-[5px]">
          <Combo label="object type" value="多段线" className="h-6 w-[170px]" />
          <button type="button" aria-label="customize" className="flex size-[25px] items-center justify-center rounded-xs border-2 border-[#4a6478] bg-[#eee]">
            <Icon name="optionPick" />
          </button>
        </div>
        <table className="w-[199px] border-collapse">
          <tbody>
            <tr className="h-[18px]">
              <th className={head}>颜色</th>
              <td className={cell}><div className="flex h-[17px] items-center"><Icon name="orange" size="size-4" /><span className="pl-0.5">颜色</span><span className="ml-1.5">30</span></div></td>
            </tr>
            <tr className="h-[18px]"><th className={head}>图层</th><td className={cell}><div className="h-[17px] pl-0.5">细实线</div></td></tr>
            <tr className="h-[18px]">
              <th className={head}>线型</th>
              <td className={cell}><div className="flex h-[17px] items-center gap-1 pl-[5px]"><span className="h-px w-[51px] bg-black" />ByLayer</div></td>
            </tr>
            <tr className="h-[18px]"><th className={head}>全局宽度</th><td className={cell}><div className="flex h-[17px] items-end pl-0.5">10</div></td></tr>
            <tr className="h-[18px] bg-[#316ac5] text-white">
              <th className={head}>闭合</th>
              <td className="border border-[#777] p-0">
                <div className="flex h-[17px]">
                  <select aria-label="闭合" className="min-w-0 flex-1 appearance-none border border-[#c8781e] text-xs leading-none outline-none">
                    <option>是</option>
                  </select>
                  <span className="flex w-[19px] items-center justify-center border-l-4 border-[#f0f0f1] bg-[#c3d3f8]"><Chevron dir="down" /></span>
                </div>
              </td>
            </tr>
          </tbody>
        </table>
      </div>
      <div className="flex flex-1 flex-col items-center gap-1 text-white">
        <button type="button" aria-label="close palette" className="flex">
          <svg viewBox="0 0 8 8" className="size-2" stroke="#fff" strokeWidth="2"><path d="M1 1l6 6M7 1L1 7" /></svg>
        </button>
        <button type="button" aria-label="palette menu" className="flex">
          <svg viewBox="0 0 8 8" className="size-2" stroke="#fff"><path d="M1 1.500h6M1 4.500h6M1 7.500h6" /></svg>
        </button>
      </div>
      <div className="pointer-events-none absolute left-[108px] top-[91px] size-[60px] rounded-full bg-[#f4f400] mix-blend-multiply" />
      <svg viewBox="0 0 14 22" className="pointer-events-none absolute left-[138px] top-[122px] h-[22px] w-[14px]" aria-hidden="true">
        <path d="M1 1v17l4-4 3 7 3-1-3-7h5z" fill="#fff" stroke="#111" />
      </svg>
    </section>
  );
}

function LayoutTabs() {
  return (
    <div className="flex h-4 bg-[#e8e8d6] pr-[18px] text-xs text-black">
      <div className="flex w-[58px] items-center justify-around px-0.5">
        {['M2 0v8M8 0L3 4l5 4z', 'M7 0L2 4l5 4z', 'M3 0l5 4-5 4z', 'M8 0v8M2 0l5 4-5 4z'].map((d) => (
          <button key={d} type="button" aria-label="layout nav" className="flex">
            <svg viewBox="0 0 10 8" className="h-2 w-[10px]" fill="#b5b8a8" stroke="#b5b8a8"><path d={d} /></svg>
          </button>
        ))}
      </div>
      <button type="button" className="w-[42px] bg-black leading-4 text-white [clip-path:polygon(0_0,100%_0,86%_100%,14%_100%)]">模型</button>
      {['布局1', '布局2'].map((t) => (
        <button key={t} type="button" className="flex w-[46px] items-center justify-end gap-0.5">
          {t}
          <svg viewBox="0 0 8 16" className="h-4 w-2" stroke="#555"><path d="M1 16L7 0" /></svg>
        </button>
      ))}
      <div className="ml-auto flex w-[317px] bg-[#f6f6f1]">
        <ScrollButton dir="left" />
        <span className="grow-[15]" />
        <Thumb />
        <span className="grow-[4]" />
        <ScrollButton dir="right" />
      </div>
    </div>
  );
}

function CommandLine() {
  return (
    <section className="flex h-[59px] shrink-0">
      <div className="w-[15px] pt-1 pl-0.5">
        <div className="h-1 w-3 bg-[conic-gradient(#444_25%,transparent_0)] bg-[size:2px_2px]" />
      </div>
      <div className="flex flex-1 flex-col rounded-l-sm bg-[#f8f8f8]">
        <div className="flex h-10 border-b border-[#888]">
          <div className="flex-1 whitespace-pre pl-[3px] pt-0.5 text-[15px] leading-4 text-black">
            <p>命令<span className="text-[13px]">: *</span>取消<span className="text-[13px]">*</span></p>
            <p>命令<span className="text-[13px]">:</span></p>
          </div>
          <div className="flex flex-col justify-between py-px"><ScrollButton dir="up" /><ScrollButton dir="down" /></div>
        </div>
        <div className="flex flex-1 items-center">
          <label htmlFor="command" className="pl-[3px] pt-0.5 text-[15px] leading-4 text-black">命令<span className="text-[13px]">:</span></label>
          <input id="command" className="h-4 min-w-0 flex-1 bg-transparent px-1 text-[13px] outline-none" />
          <div className="flex w-[66px] bg-[#f3f3ee] pl-0.5">
            <ScrollButton dir="left" /><Thumb /><span className="flex-1" /><ScrollButton dir="right" />
          </div>
          <div className="h-4 w-[18px] bg-[#e8e8d6]" />
        </div>
      </div>
    </section>
  );
}

function StatusButton({ name, on = false }: { name: string; on?: boolean }) {
  return (
    <button
      type="button"
      aria-label={name}
      className={clsx('flex h-full w-[22px] shrink-0 items-center justify-center border-r border-[#777]', on ? 'bg-[#b9d6e0]' : 'bg-[#b8b8ba]')}
    >
      <Icon name={name} />
    </button>
  );
}

function StatusBar() {
  return (
    <footer className="flex h-[23px] shrink-0 border-t border-b-2 border-t-black border-b-[#3470c0] bg-linear-to-b from-[#eef2f2] via-[#c8dde2] to-[#e5f0ec]">
      <output className="flex w-[193px] items-center whitespace-pre pl-3 pt-1 text-[10px] text-black">343.2944, 216.1370, 0.0000</output>
      <div className="flex border-l border-[#777]">
        {['snap', 'grid', 'ortho'].map((n) => <StatusButton key={n} name={n} />)}
        {['polar', 'osnap', 'otrack', 'ducs', 'dyn', 'lwt', 'quickProps'].map((n) => <StatusButton key={n} name={n} on />)}
      </div>
      <div className="ml-auto flex border-l border-[#777]">
        <button type="button" className="w-[30px] border-r border-[#777] bg-[#b8b8ba] text-xs text-black">模型</button>
        <StatusButton name="modelSheet" />
        <StatusButton name="quickView" />
      </div>
      <div className="ml-4 flex border-l border-[#777]">
        {['pan', 'zoom', 'wheel', 'motion'].map((n) => <StatusButton key={n} name={n} />)}
      </div>
      <div className="ml-[17px] flex border-l border-[#777]">
        <button type="button" className="flex w-[54px] items-center justify-center gap-0.5 border-r border-[#777] bg-[#b8b8ba] text-[11px] text-black">
          <Icon name="scaleMan" size="size-4" />1:1<Caret />
        </button>
        <StatusButton name="scaleVis" />
        <StatusButton name="scaleAuto" />
      </div>
      <div className="ml-1.5 flex border-l border-[#777]">
        <StatusButton name="gear" />
        <StatusButton name="padlock" />
        <StatusButton name="status" on />
        <DropArrow className="h-full w-[22px] bg-[#b8b8ba]" />
        <StatusButton name="clean" />
      </div>
    </footer>
  );
}

export default function App() {
  return (
    <div className="relative flex h-screen w-full flex-col overflow-hidden bg-[#a9a9b2] font-['Liberation_Mono','Noto_Sans_CJK_SC',monospace]">
      <TitleBar />
      <RibbonTabs />
      <Ribbon />
      <div className="mt-[5px] shrink-0">
        <StandardBar />
        <PropertiesBar />
      </div>

      <main className="mt-1 flex min-h-0 flex-1 pr-1">
        <div className="w-[25px] shrink-0"><SideBar tools={drawTools} /></div>
        <div className="mx-[5px] flex min-w-0 flex-1 flex-col pb-1 pl-px pt-0.5">
          <div className="flex min-h-0 flex-1">
            <div className="relative min-w-0 flex-1 overflow-hidden bg-black">
              <Drawing />
              <UcsIcon />
              <WindowButtons className="absolute right-[10px] top-2 gap-[10px]" />
              <QuickProperties />
            </div>
            <div className="flex w-[18px] flex-col items-center bg-[#f6f6f1]">
              <ScrollButton dir="up" />
              <span className="grow-3" />
              <Thumb vertical />
              <span className="grow-2" />
              <ScrollButton dir="down" />
            </div>
          </div>
          <LayoutTabs />
        </div>
        <div className="w-6 shrink-0">
          <SideBar tools={modifyTools} />
          <SideBar tools={orderTools} />
        </div>
      </main>

      <CommandLine />
      <StatusBar />

      <button type="button" aria-label="application menu" className="absolute left-0 top-1 h-[46px] w-[34px] bg-linear-to-br from-[#777] to-[#3c3c3c]">
        <svg viewBox="0 0 34 46" className="h-full w-full" aria-hidden="true">
          <path d="M6 2L18 0l13 29-7 5-4-7-6 1-3 8-7-3z" fill="#d81e1e" />
          <path d="M15 1l3-1 13 29-7 5-4-7z" fill="#ee3c32" />
          <path d="M6 2l3-1-1 30-4 2z" fill="#b81414" />
          <path d="M13 13l4 9-4 1z" fill="#4a2a2a" />
          <path d="M4 33l7 3 4-7 5-1 4 6-11 4z" fill="#8f1010" />
          <path d="M25 38h7l-3.500 4z" fill="#200" />
        </svg>
      </button>
      <div className="pointer-events-none absolute right-0 top-0 flex h-[54px] w-[147px] items-end justify-end overflow-hidden rounded-md border border-black/10 bg-white/10 pb-1 pr-1" aria-hidden="true">
        <span className="mb-1 mr-4 text-[13px] font-bold text-white/30">YUSK</span>
        <span className="font-['Noto_Sans_CJK_SC'] text-[40px] leading-none text-[#777]/50">视友</span>
      </div>
    </div>
  );
}
